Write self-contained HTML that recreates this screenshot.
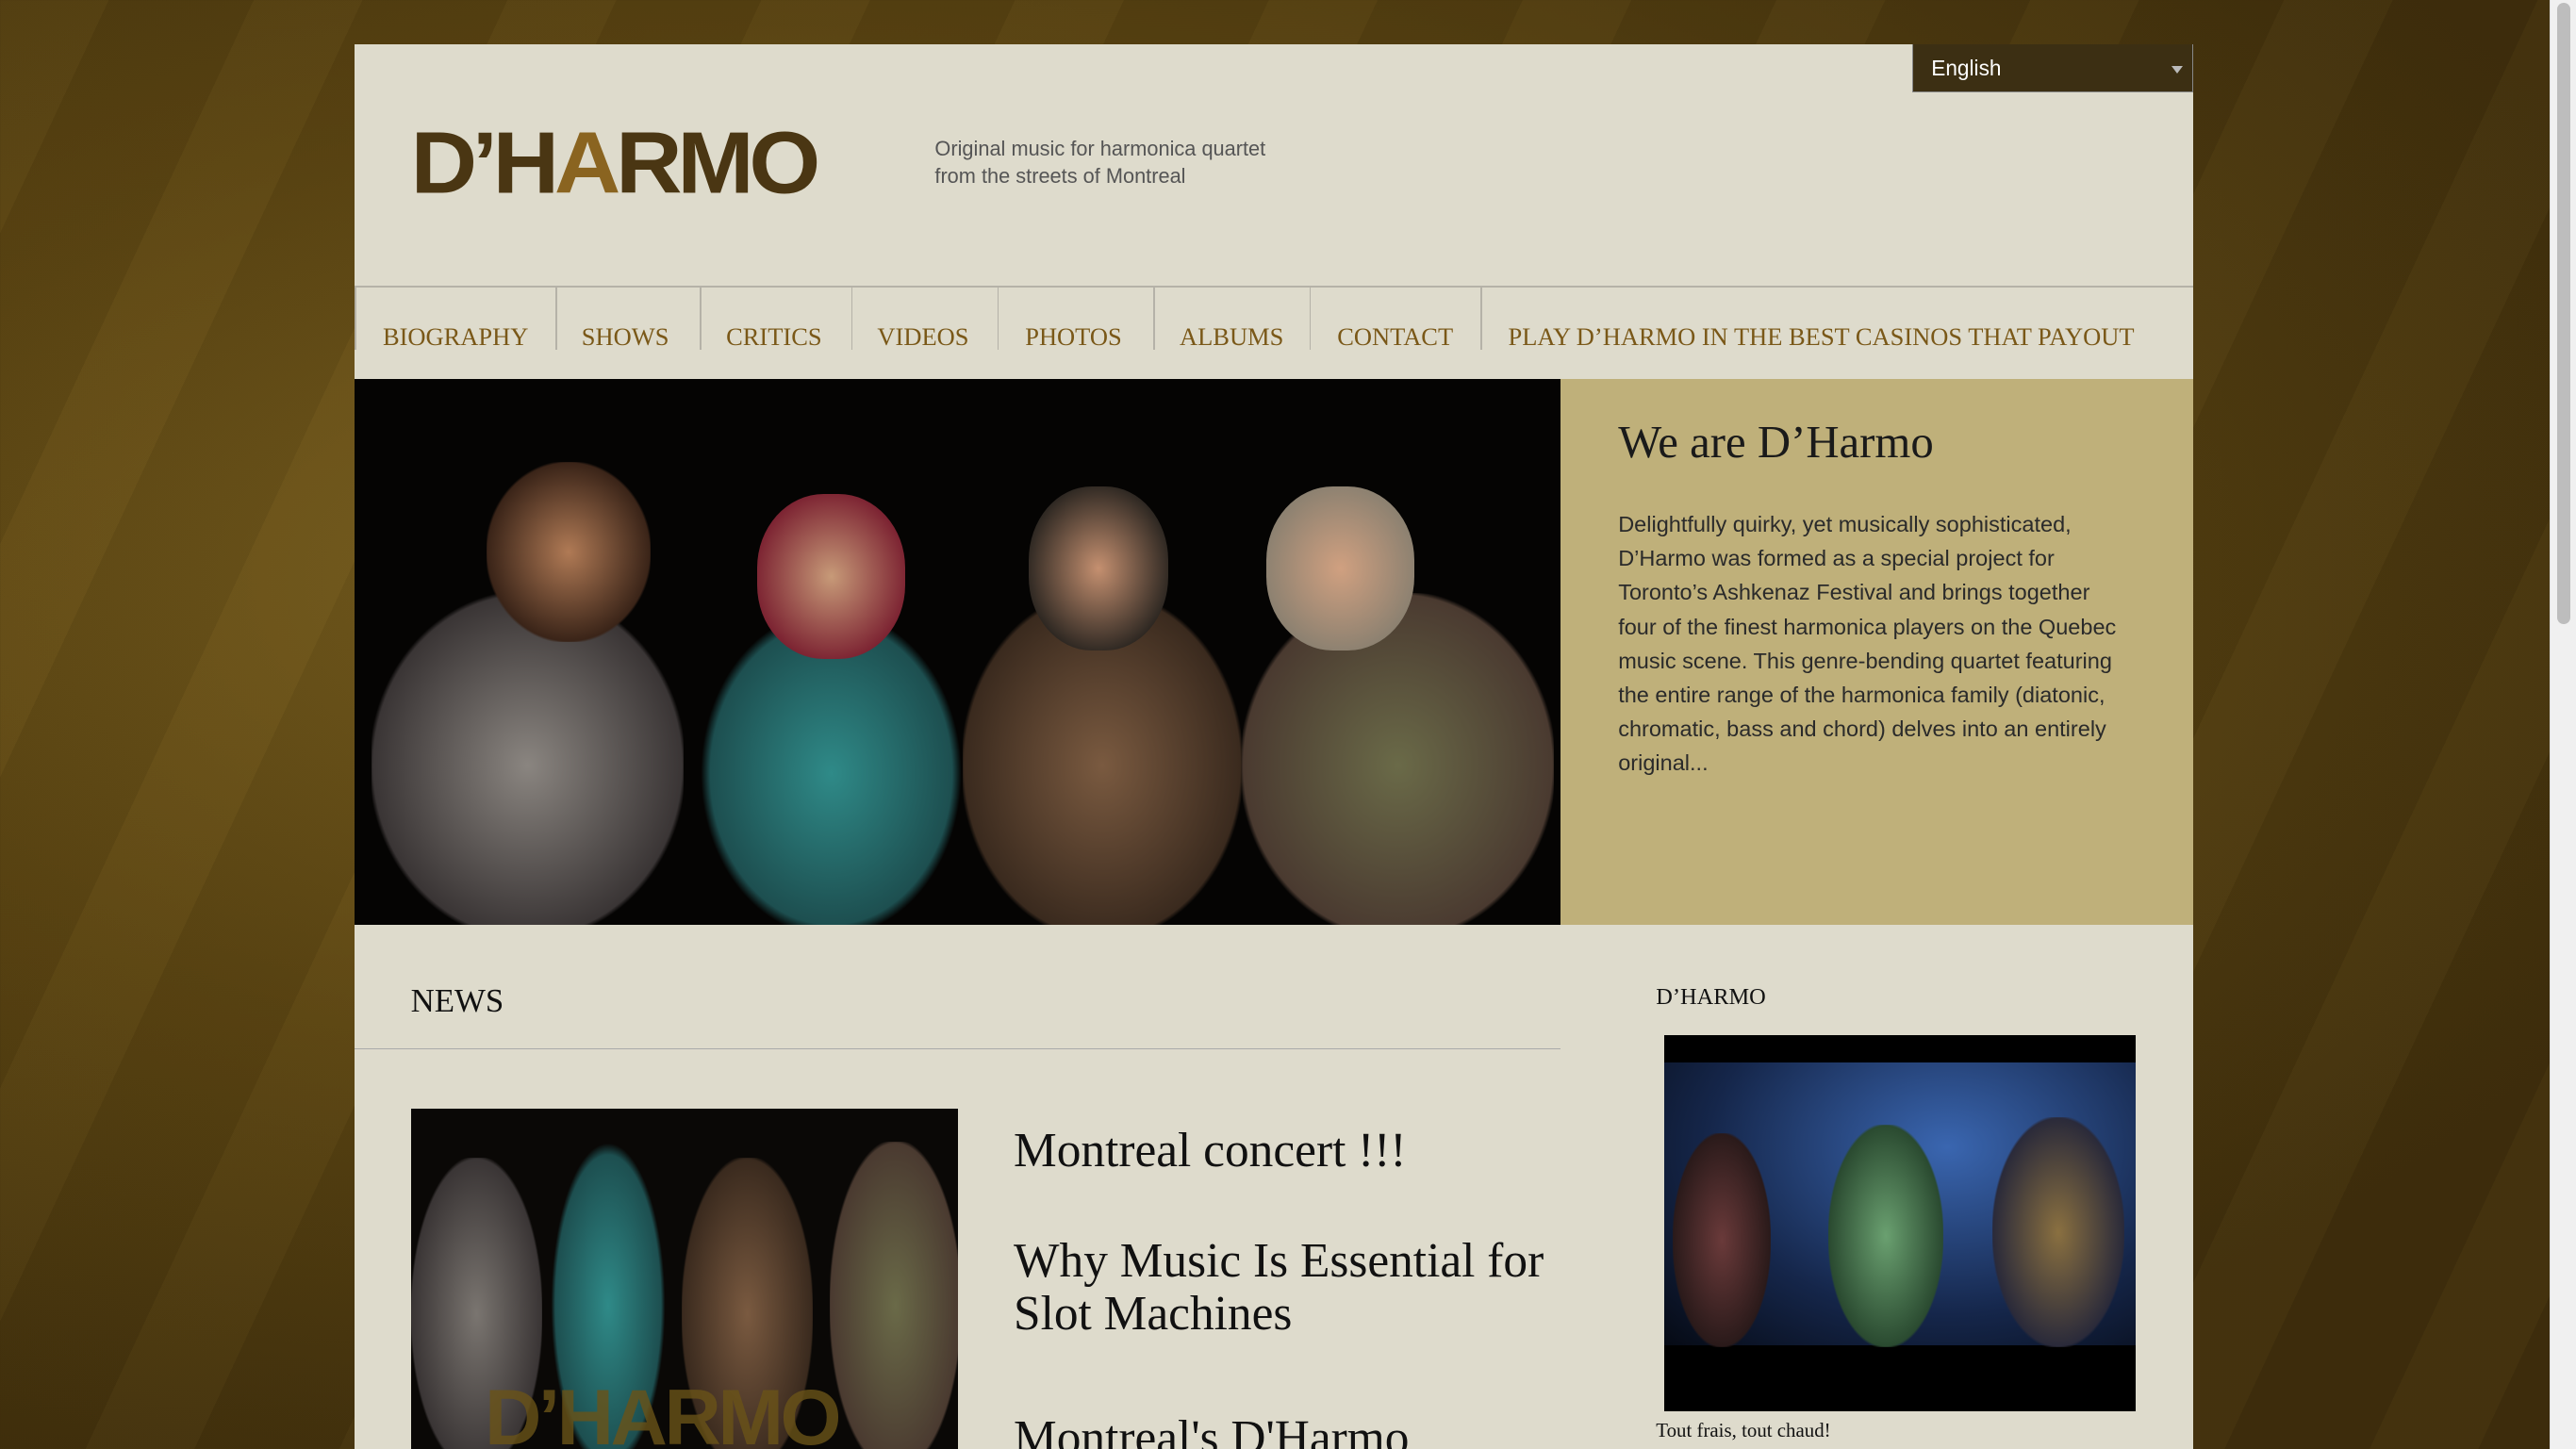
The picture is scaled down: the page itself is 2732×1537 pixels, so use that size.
<!DOCTYPE html>
<html><head><meta charset="utf-8"><style>
html,body{margin:0;padding:0;overflow:hidden}
body{width:1568px;height:882px;zoom:1.74235;position:relative;font-family:"Liberation Sans",sans-serif;
background:radial-gradient(ellipse at 30% 40%,#7a6020 0%,#5a4412 40%,#3f2e0c 80%),#4a3710;}
.bgstreak{position:absolute;inset:0;background:repeating-linear-gradient(115deg,rgba(255,220,120,.025) 0 60px,rgba(0,0,0,.04) 60px 140px);}
.sb{position:absolute;left:1552px;top:0;width:16px;height:882px;background:#f0f0f0;border-left:1px solid #ddd}
.sb i{position:absolute;left:4px;top:2px;width:8px;height:378px;border-radius:4px;background:#bdbdbd}
.wrap{position:absolute;left:216px;top:27px;width:1119px;height:855px;overflow:hidden;background:#dedbcc}
.lang{position:absolute;left:948px;top:0;height:29px;background:#3c2f13;border:1px solid #888;border-top:none;color:#fff;font-size:13px;line-height:29px;padding-left:11px;box-sizing:border-box;width:171px}
.lang:after{content:"";position:absolute;right:6px;top:13px;border:4px solid transparent;border-top:5px solid #bbb}
.logo{position:absolute;left:34px;top:40px;font-family:"Liberation Sans",sans-serif;font-weight:bold;font-size:56px;letter-spacing:-3px;color:#4a3613;transform:scaleY(.95)}
.logo b{color:#8a6420}
.tag{position:absolute;left:353px;top:55px;font-size:12.5px;line-height:17px;color:#555}
.nav{position:absolute;left:0;top:147px;width:1119px;height:56px;border-top:1.5px solid #b5b2a8}
.nav span{position:absolute;top:21px;font-family:"Liberation Serif",serif;font-size:15.2px;color:#7a5818}
.nav i{position:absolute;top:0;width:1px;height:38px;background:#b5b2a8}
.hero{position:absolute;left:0;top:204px;width:734px;height:332px;background:#050403;overflow:hidden}
.p{position:absolute;border-radius:45%}
.gold{position:absolute;left:734px;top:204px;width:385px;height:332px;background:#bfb07a}
.gold h2{margin:0;position:absolute;left:35px;top:22px;font-family:"Liberation Serif",serif;font-weight:normal;font-size:28px;color:#1a1a1a}
.gold p{margin:0;position:absolute;left:35px;top:78px;width:305px;font-size:13.5px;line-height:20.7px;color:#2a2a2a}
.news{position:absolute;left:34px;top:571px;font-family:"Liberation Serif",serif;font-size:20px;color:#111}
.hr{position:absolute;left:0;top:611px;width:734px;height:1px;background:#aaa}
.nimg{position:absolute;left:34px;top:648px;width:333px;height:220px;background:#0a0806;overflow:hidden}
.t{position:absolute;left:401px;font-family:"Liberation Serif",serif;font-size:29.5px;line-height:32px;color:#111}
.side{position:absolute;left:792px;top:572px;font-family:"Liberation Serif",serif;font-size:14px;color:#111}
.simg{position:absolute;left:797px;top:603px;width:287px;height:229px;background:#000;overflow:hidden}
.cap{position:absolute;left:792px;top:837px;font-family:"Liberation Serif",serif;font-size:12px;color:#111}
</style></head><body>
<div class="bgstreak"></div>
<div class="wrap">
<div class="lang">English</div>
<div class="logo">D’H<b>A</b>RMO</div>
<div class="tag">Original music for harmonica quartet<br>from the streets of Montreal</div>
<div class="nav">
<i style="left:0"></i><span style="left:17px">BIOGRAPHY</span>
<i style="left:122px"></i><span style="left:138px">SHOWS</span>
<i style="left:210px"></i><span style="left:226px">CRITICS</span>
<i style="left:302px"></i><span style="left:318px">VIDEOS</span>
<i style="left:391px"></i><span style="left:408px">PHOTOS</span>
<i style="left:486px"></i><span style="left:502px">ALBUMS</span>
<i style="left:581px"></i><span style="left:598px">CONTACT</span>
<i style="left:685px"></i><span style="left:702px">PLAY D’HARMO IN THE BEST CASINOS THAT PAYOUT</span>
</div>
<div class="hero">
<div class="p" style="left:10px;top:130px;width:190px;height:210px;background:radial-gradient(#8a8580,#3a3535 70%,transparent 72%)"></div>
<div class="p" style="left:80px;top:50px;width:100px;height:110px;background:radial-gradient(#b07a55,#3a2418 70%,transparent 72%)"></div>
<div class="p" style="left:210px;top:140px;width:160px;height:200px;background:radial-gradient(#2f8a88,#1d4f50 65%,transparent 70%)"></div>
<div class="p" style="left:245px;top:70px;width:90px;height:100px;background:radial-gradient(#c79a78,#7a2030 75%,transparent 77%)"></div>
<div class="p" style="left:370px;top:130px;width:170px;height:210px;background:radial-gradient(#7a5a40,#3a2a1e 70%,transparent 72%)"></div>
<div class="p" style="left:410px;top:65px;width:85px;height:100px;background:radial-gradient(#c59070,#2a2520 75%,transparent 77%)"></div>
<div class="p" style="left:540px;top:130px;width:190px;height:210px;background:radial-gradient(#6a6a48,#4a3a30 70%,transparent 72%)"></div>
<div class="p" style="left:555px;top:65px;width:90px;height:100px;background:radial-gradient(#d0a080,#8a8070 75%,transparent 77%)"></div>
</div>
<div class="gold"><h2>We are D’Harmo</h2>
<p>Delightfully quirky, yet musically sophisticated, D’Harmo was formed as a special project for Toronto’s Ashkenaz Festival and brings together four of the finest harmonica players on the Quebec music scene. This genre-bending quartet featuring the entire range of the harmonica family (diatonic, chromatic, bass and chord) delves into an entirely original...</p></div>
<div class="news">NEWS</div>
<div class="hr"></div>
<div class="nimg">
<div class="p" style="left:0;top:30px;width:80px;height:190px;background:radial-gradient(#7a7570,#3a3535 70%,transparent 72%)"></div>
<div class="p" style="left:85px;top:20px;width:70px;height:200px;background:radial-gradient(#2f8a88,#1d4f50 65%,transparent 70%)"></div>
<div class="p" style="left:165px;top:30px;width:80px;height:190px;background:radial-gradient(#7a5a40,#3a2a1e 70%,transparent 72%)"></div>
<div class="p" style="left:255px;top:20px;width:80px;height:200px;background:radial-gradient(#6a6a48,#4a3a30 70%,transparent 72%)"></div>
<div style="position:absolute;left:45px;top:160px;font:bold 48px 'Liberation Sans',sans-serif;color:#6a5318;opacity:.8;letter-spacing:-2px">D’HARMO</div>
</div>
<div class="t" style="top:658px">Montreal concert !!!</div>
<div class="t" style="top:725px">Why Music Is Essential for<br>Slot Machines</div>
<div class="t" style="top:833px">Montreal's D'Harmo</div>
<div class="side">D’HARMO</div>
<div class="simg"><div style="position:absolute;left:0;top:17px;width:287px;height:172px;background:radial-gradient(ellipse at 60% 30%,#3a66b0,#15264a 60%,#060a14)"></div>
<div class="p" style="left:5px;top:60px;width:60px;height:130px;background:radial-gradient(#6a3a3a,#2a1a1a 70%,transparent 72%)"></div>
<div class="p" style="left:100px;top:55px;width:70px;height:135px;background:radial-gradient(#6aa070,#2a4a30 70%,transparent 72%)"></div>
<div class="p" style="left:200px;top:50px;width:80px;height:140px;background:radial-gradient(#8a7040,#2a2a3a 70%,transparent 72%)"></div>
</div>
<div class="cap">Tout frais, tout chaud!</div>
</div>
<div class="sb"><i></i></div>
</body></html>
